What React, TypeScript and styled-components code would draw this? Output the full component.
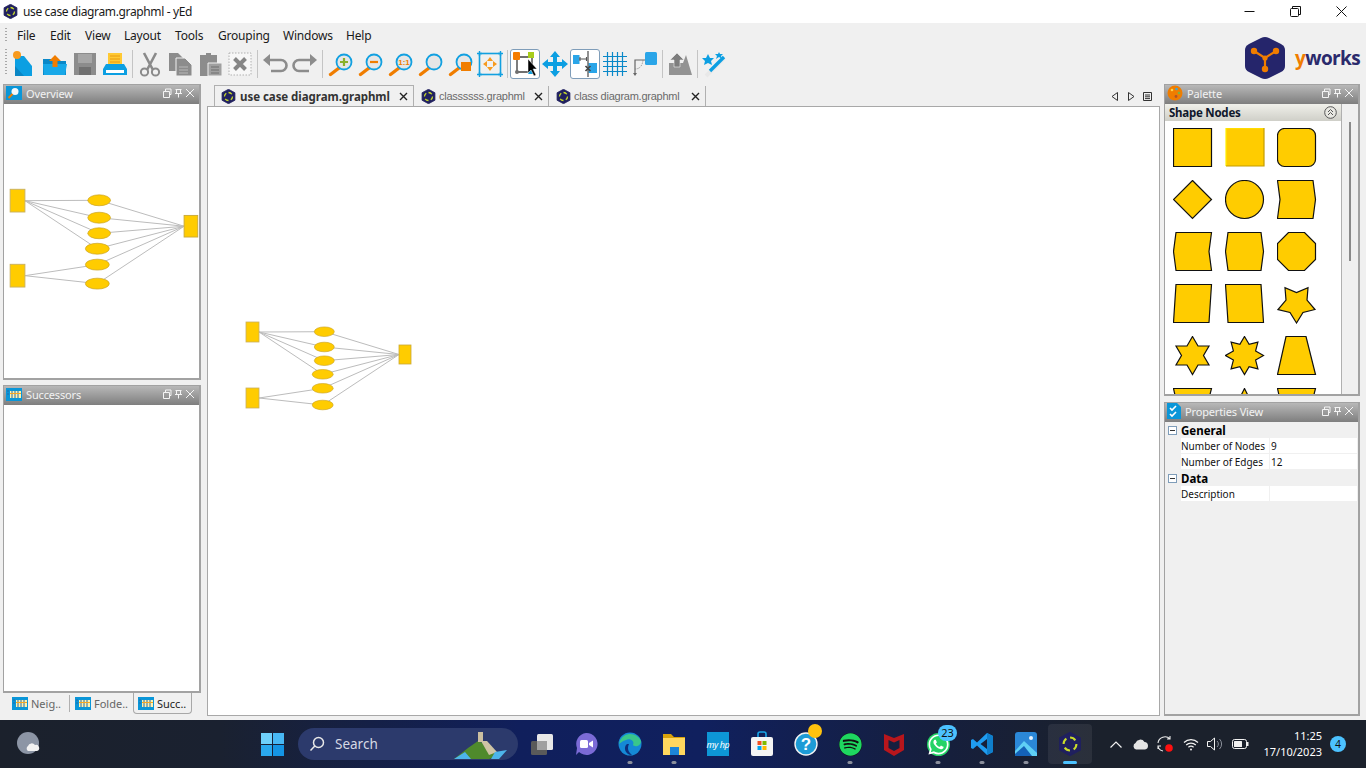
import React from 'react'
import styled, { createGlobalStyle } from 'styled-components'
import { FaSpotify, FaWhatsapp } from 'react-icons/fa'

const GlobalStyle = createGlobalStyle`
  html, body {
    margin: 0;
    padding: 0;
    overflow: hidden;
    background: #f0f0f0;
  }
  * {
    box-sizing: border-box;
  }
`

const UI_FONT = `'Noto Sans', 'Open Sans', sans-serif`

const Screen = styled.div`
  width: 1366px;
  height: 768px;
  display: flex;
  flex-direction: column;
  background: #f0f0f0;
  font-family: ${UI_FONT};
  color: #1a1a1a;
  overflow: hidden;
`

const TitleBar = styled.div`
  height: 23px;
  flex: none;
  display: flex;
  align-items: center;
  background: #fff;
  padding: 0 2px 0 3px;
  font-size: 12px;
`

const WindowTitle = styled.span`
  margin-left: 5px;
  flex: 1;
  letter-spacing: -0.36px;
`

const WindowButton = styled.div`
  width: 46px;
  height: 23px;
  display: flex;
  align-items: center;
  justify-content: center;
`

const Header = styled.div`
  height: 61px;
  flex: none;
  display: flex;
`

const HeaderBars = styled.div`
  flex: 1;
  display: flex;
  flex-direction: column;
`

const MenuBar = styled.div`
  height: 24px;
  display: flex;
  align-items: center;
  padding-left: 5px;
`

const Grip = styled.div<{ $h: number; $after: number }>`
  width: 2px;
  height: ${(p) => p.$h}px;
  flex: none;
  margin-right: ${(p) => p.$after}px;
  background: repeating-linear-gradient(to bottom, #a8a8a8 0 1px, transparent 1px 3px);
`

const Menu = styled.span<{ $w: number }>`
  width: ${(p) => p.$w}px;
  font-size: 12px;
  letter-spacing: -0.2px;
  color: #1a1a1a;
  flex: none;
`

const ToolBar = styled.div`
  height: 33px;
  display: flex;
  align-items: flex-start;
  padding-left: 5px;
  padding-top: 2px;
`

const ToolButton = styled.div<{ $on?: boolean }>`
  width: 30px;
  height: 30px;
  flex: none;
  border-radius: 3px;
  border: 1px solid ${(p) => (p.$on ? '#7f9db9' : 'transparent')};
  background: ${(p) => (p.$on ? '#fff' : 'transparent')};
  display: flex;
  align-items: center;
  justify-content: center;
`

const ToolSep = styled.div`
  width: 1px;
  height: 28px;
  margin: 1px 2px;
  background: #c4c4c4;
  flex: none;
`

const LogoBox = styled.div`
  width: 125px;
  height: 61px;
  flex: none;
  display: flex;
  align-items: center;
  gap: 8px;
  padding-left: 2px;
  padding-top: 9px;
`

const LogoWord = styled.span`
  font-family: 'Open Sans', sans-serif;
  font-weight: 700;
  font-size: 19px;
  letter-spacing: -0.6px;
  color: #2a2a6c;
  & em {
    font-style: normal;
    color: #f07d00;
  }
`

const Main = styled.div`
  flex: 1;
  min-height: 0;
  display: flex;
  padding: 0 6px 4px 3px;
`

const LeftColumn = styled.div`
  width: 198px;
  flex: none;
  display: flex;
  flex-direction: column;
  gap: 5px;
`

const CenterColumn = styled.div`
  flex: 1;
  min-width: 0;
  display: flex;
  flex-direction: column;
  margin: 0 4px 0 6px;
`

const RightColumn = styled.div`
  width: 196px;
  flex: none;
  display: flex;
  flex-direction: column;
  gap: 6px;
`

const Panel = styled.div<{ $h: number }>`
  height: ${(p) => p.$h}px;
  flex: none;
  display: flex;
  flex-direction: column;
  border: 1px solid #a2a2a2;
  border-right-width: 2px;
  border-bottom-width: 2px;
  background: #fff;
`

const PanelBar = styled.div`
  height: 19px;
  flex: none;
  display: flex;
  align-items: center;
  padding: 0 4px 3px 2px;
  background: linear-gradient(to bottom, #b8b8b8, #7e7e7e);
  color: #f2f2f2;
  font-size: 11px;
  letter-spacing: -0.15px;
`

const PanelTitle = styled.span`
  flex: 1;
  margin-left: 4px;
`

const BottomTabs = styled.div`
  height: 23px;
  flex: none;
  margin-top: -5px;
  display: flex;
  align-items: flex-start;
  padding-left: 8px;
  font-size: 11px;
  color: #666;
`

const BottomTab = styled.div<{ $w: number; $on?: boolean }>`
  width: ${(p) => p.$w}px;
  height: 21px;
  flex: none;
  display: flex;
  align-items: center;
  gap: 3px;
  padding-left: ${(p) => (p.$on ? 4 : 0)}px;
  color: ${(p) => (p.$on ? '#222' : '#666')};
  border: 1px solid ${(p) => (p.$on ? '#a8a8a8' : 'transparent')};
  border-top: 0;
  border-radius: 0 0 4px 4px;
`

const BottomTabSep = styled.div`
  width: 1px;
  height: 17px;
  margin: 2px 4px 0 0;
  background: #b0b0b0;
  flex: none;
`

const TabRow = styled.div`
  height: 22px;
  flex: none;
  display: flex;
  align-items: flex-end;
  padding-left: 7px;
`

const Tab = styled.div<{ $w: number; $on?: boolean }>`
  width: ${(p) => p.$w}px;
  height: ${(p) => (p.$on ? 21 : 20)}px;
  flex: none;
  display: flex;
  align-items: center;
  padding: 0 5px 0 ${(p) => (p.$on ? 6 : 7)}px;
  gap: ${(p) => (p.$on ? 4 : 3)}px;
  font-family: ${(p) => (p.$on ? UI_FONT : `'Liberation Sans', sans-serif`)};
  font-size: ${(p) => (p.$on ? 11.5 : 11)}px;
  letter-spacing: ${(p) => (p.$on ? -0.05 : -0.25)}px;
  font-weight: ${(p) => (p.$on ? 700 : 400)};
  color: ${(p) => (p.$on ? '#333' : '#6a6a6a')};
  border-right: 1px solid #b0b0b0;
  border-left: ${(p) => (p.$on ? '1px solid #b0b0b0' : '0')};
  border-top: ${(p) => (p.$on ? '1px solid #b0b0b0' : '0')};
`

const TabText = styled.span`
  flex: 1;
  white-space: nowrap;
`

const TabNav = styled.div`
  margin-left: auto;
  height: 20px;
  display: flex;
  align-items: center;
  gap: 8px;
  padding-right: 8px;
`

const Canvas = styled.div`
  flex: 1;
  min-height: 0;
  background: #fff;
  border: 1px solid #a8a8a8;
  padding: 213px 0 0 37px;
`

const OverviewBody = styled.div`
  flex: 1;
  padding: 83px 0 0 5px;
  overflow: hidden;
`

const PaletteBody = styled.div`
  flex: 1;
  min-height: 0;
  display: flex;
`

const PaletteList = styled.div`
  flex: 1;
  min-width: 0;
  display: flex;
  flex-direction: column;
  border-right: 1px solid #b0b0b0;
`

const PaletteHeader = styled.div`
  height: 17px;
  flex: none;
  display: flex;
  align-items: center;
  justify-content: space-between;
  padding: 0 4px;
  background: linear-gradient(to bottom, #f0f0ea, #cfcfc8);
  font-size: 11.5px;
  letter-spacing: -0.25px;
  font-weight: 700;
  color: #10182c;
`

const ShapeGrid = styled.div`
  flex: 1;
  overflow: hidden;
  display: grid;
  grid-template-columns: repeat(3, 40px);
  grid-auto-rows: 40px;
  gap: 12px;
  padding: 7px 0 0 8px;
`

const ScrollTrack = styled.div`
  width: 16px;
  flex: none;
  background: #f0f0f0;
  padding: 18px 0 0 7px;
`

const ScrollThumb = styled.div`
  width: 2px;
  height: 139px;
  background: #8a8a8a;
`

const PropBody = styled.div`
  flex: 1;
  background: #f0f0f0;
  padding: 0 1px 0 2px;
  font-size: 10px;
`

const PropSection = styled.div`
  height: 16px;
  display: flex;
  align-items: center;
  gap: 4px;
  padding-left: 1px;
  font-size: 11.5px;
  font-weight: 700;
  color: #000;
`

const ExpandBox = styled.span`
  width: 9px;
  height: 9px;
  border: 1px solid #7f9db9;
  background: #fff;
  display: flex;
  align-items: center;
  justify-content: center;
  &::after {
    content: '';
    width: 5px;
    height: 1px;
    background: #333;
  }
`

const PropRow = styled.div`
  height: 16px;
  margin-left: 14px;
  display: grid;
  grid-template-columns: 88px 1fr;
  gap: 1px;
  padding-bottom: 1px;
`

const PropCell = styled.div`
  background: #fff;
  color: #111;
  display: flex;
  align-items: center;
  white-space: nowrap;
  & + & {
    padding-left: 1px;
  }
`

const Taskbar = styled.div`
  height: 48px;
  flex: none;
  display: flex;
  align-items: center;
  padding-left: 17px;
  background: linear-gradient(
    to right,
    #1b212c 0,
    #1a2130 220px,
    #101f5c 520px,
    #10205e 700px,
    #161f3c 950px,
    #1b212c 1100px
  );
  color: #fff;
`

const Weather = styled.div`
  width: 24px;
  height: 24px;
  flex: none;
  margin-right: 209px;
`

const StartButton = styled.div`
  width: 44px;
  height: 48px;
  flex: none;
  display: flex;
  align-items: center;
  justify-content: center;
  margin-right: 4px;
`

const SearchBox = styled.div`
  width: 220px;
  height: 32px;
  flex: none;
  border-radius: 16px;
  background: #2c3a6c;
  display: flex;
  align-items: center;
  padding-left: 11px;
  gap: 10px;
  font-size: 13.5px;
  color: #d6d9e4;
  margin-right: 2px;
`

const SearchArt = styled.div`
  margin-left: auto;
  margin-right: 9px;
  height: 32px;
`

const AppButton = styled.div<{ $active?: boolean }>`
  position: relative;
  width: 44px;
  height: 40px;
  flex: none;
  border-radius: 4px;
  display: flex;
  align-items: center;
  justify-content: center;
  background: ${(p) => (p.$active ? 'rgba(255,255,255,0.07)' : 'transparent')};
`

const RunDot = styled.span<{ $active?: boolean }>`
  position: absolute;
  bottom: 0;
  left: 50%;
  transform: translateX(-50%);
  width: ${(p) => (p.$active ? 14 : 5)}px;
  height: 3px;
  border-radius: 2px;
  background: ${(p) => (p.$active ? '#4cc2ff' : '#8b8f9c')};
`

const Badge = styled.span`
  position: absolute;
  top: 1px;
  right: 3px;
  min-width: 19px;
  height: 16px;
  border-radius: 8px;
  background: #4cc2ff;
  color: #111;
  font-size: 11px;
  line-height: 16px;
  text-align: center;
`

const YellowDot = styled.span`
  position: absolute;
  top: 0;
  right: 6px;
  width: 14px;
  height: 14px;
  border-radius: 50%;
  background: #ffc20e;
`

const HpTile = styled.div`
  width: 22px;
  height: 24px;
  background: #0d96d6;
  color: #fff;
  font-size: 9px;
  font-style: italic;
  white-space: nowrap;
  display: flex;
  align-items: center;
  justify-content: center;
  letter-spacing: -0.4px;
`

const Tray = styled.div`
  margin-left: auto;
  height: 48px;
  display: flex;
  align-items: center;
  padding-right: 20px;
`

const TrayIcon = styled.div<{ $w: number }>`
  width: ${(p) => p.$w}px;
  flex: none;
  display: flex;
  justify-content: center;
`

const Clock = styled.div`
  width: 66px;
  margin-left: 2px;
  text-align: right;
  font-size: 11px;
  line-height: 16px;
  color: #fff;
`

const NotifyDot = styled.div`
  width: 16px;
  height: 16px;
  flex: none;
  margin-left: 8px;
  border-radius: 50%;
  background: #4cc2ff;
  color: #111;
  font-size: 10.5px;
  line-height: 16px;
  text-align: center;
`

// ---- small drawings ----

const YedLogo = ({ size = 14 }: { size?: number }) => (
  <svg width={size} height={size} viewBox='0 0 28 28' style={{ flex: 'none' }}>
    <path d='M14 0.5 L26 7 V21 L14 27.5 L2 21 V7 Z' fill='#20205f' stroke='#20205f' strokeWidth='1.5' strokeLinejoin='round' />
    <circle cx='14' cy='14' r='7.5' fill='none' stroke='#c9dc2a' strokeWidth='2.4' strokeDasharray='7 4.5' />
  </svg>
)

const MiniButtons = () => (
  <svg width='34' height='10' viewBox='0 0 34 10' style={{ flex: 'none' }} fill='none' stroke='#f4f4f4'>
    <path d='M2.5 3.5 H8.5 V9.5 H2.5 Z M4.5 3 V1 H10 V6.5 H9' />
    <path d='M14.5 1.5 H20.5 M15.5 1.5 V5.5 H19.5 V1.5 M14 5.5 H21 M17.5 5.5 V9.5' />
    <path d='M25 1 L33 9 M33 1 L25 9' />
  </svg>
)

const CloseX = () => (
  <svg width='9' height='9' viewBox='0 0 9 9' style={{ flex: 'none' }}>
    <path d='M1 1 L8 8 M8 1 L1 8' stroke='#222' strokeWidth='1.4' />
  </svg>
)

const ViewIcon = () => (
  <svg width='16' height='13' viewBox='0 0 16 13' style={{ flex: 'none' }}>
    <rect width='16' height='13' fill='#0a96d8' />
    <rect x='4' y='3' width='11' height='7' fill='#fff3b0' />
    <path d='M1 3 H3 M1 6 H3 M6 3 V10 M9 3 V10 M12 3 V10' stroke='#2668a8' strokeWidth='1' />
    <rect x='4' y='5' width='11' height='1' fill='#f5a623' />
  </svg>
)

const OverviewIcon = () => (
  <svg width='16' height='14' viewBox='0 0 16 14' style={{ flex: 'none' }}>
    <rect width='16' height='14' fill='#0a96d8' />
    <circle cx='9' cy='5.5' r='3.5' fill='#f4f8fb' />
    <path d='M6.5 8 L2.5 12' stroke='#f07d00' strokeWidth='2' />
  </svg>
)

const PaletteIcon = () => (
  <svg width='16' height='16' viewBox='0 0 16 16' style={{ flex: 'none' }}>
    <circle cx='8' cy='8' r='7.5' fill='#f07d00' />
    <circle cx='5' cy='5' r='1.3' fill='#ffd24a' />
    <circle cx='9.5' cy='4' r='1.3' fill='#3aa7e0' />
    <circle cx='12' cy='8' r='1.3' fill='#7cb342' />
    <circle cx='9' cy='11.5' r='1.4' fill='#b0532a' />
  </svg>
)

const PropsIcon = () => (
  <svg width='14' height='16' viewBox='0 0 14 16' style={{ flex: 'none' }}>
    <path d='M0 0 H10 L14 4 V16 H0 Z' fill='#0a96d8' />
    <path d='M3 5 L5 7 L9 3 M3 11 L5 13 L9 9' stroke='#fff' strokeWidth='1.6' fill='none' />
  </svg>
)

const Lens = ({ children }: { children?: React.ReactNode }) => (
  <svg width='28' height='28' viewBox='0 0 28 28'>
    <path d='M13 18 L4.5 24.5' stroke='#f07d00' strokeWidth='3.4' strokeLinecap='round' />
    <circle cx='18' cy='12' r='7.5' fill='#e6e6e6' stroke='#12a0e0' strokeWidth='1.8' />
    {children}
  </svg>
)

const Icon28 = ({ children }: { children: React.ReactNode }) => (
  <svg width='28' height='28' viewBox='0 0 28 28'>
    {children}
  </svg>
)

const TOOL = {
  create: (
    <Icon28>
      <path d='M4 6 L13 6 L21 16 V26 H4 Z' fill='#0c9fe2' />
      <path d='M4 16 L13 26 H4 Z' fill='#0a86c4' />
      <circle cx='6' cy='5' r='4' fill='#f79a1e' />
    </Icon28>
  ),
  open: (
    <Icon28>
      <path d='M2 9 H10 L12 11 H25 V25 H2 Z' fill='#0a88c8' />
      <path d='M2 14 H26 L24 25 H3 Z' fill='#18a8e8' />
      <path d='M14 5 L20 11 H16.5 V17 H11.5 V11 H8 Z' fill='#f07d00' />
    </Icon28>
  ),
  save: (
    <Icon28>
      <path d='M3 3 H25 V25 H3 Z' fill='#8c8c8c' />
      <rect x='7' y='4' width='14' height='9' fill='#a6a6a6' />
      <rect x='8' y='17' width='12' height='8' fill='#707070' />
    </Icon28>
  ),
  print: (
    <Icon28>
      <rect x='7' y='3' width='14' height='12' fill='#ffc933' />
      <path d='M9 6 H19 M9 9 H19 M9 12 H19' stroke='#e89a10' />
      <path d='M5 14 H23 L26 19 V25 H2 V19 Z' fill='#0c9fe2' />
      <rect x='5' y='20' width='18' height='3' fill='#fff' />
    </Icon28>
  ),
  cut: (
    <Icon28>
      <path d='M8 3 L17 20 M20 3 L11 20' stroke='#8a8a8a' strokeWidth='2.6' />
      <circle cx='8.5' cy='22' r='3.6' fill='none' stroke='#8a8a8a' strokeWidth='2' />
      <circle cx='19.5' cy='22' r='3.6' fill='none' stroke='#8a8a8a' strokeWidth='2' />
    </Icon28>
  ),
  copy: (
    <Icon28>
      <path d='M3 3 H12 L17 8 V21 H3 Z' fill='#8c8c8c' />
      <path d='M10 8 H19 L26 15 V26 H10 Z' fill='#8c8c8c' stroke='#f0f0f0' />
      <path d='M13 17 H22 M13 20 H22 M13 23 H22' stroke='#b8b8b8' />
    </Icon28>
  ),
  paste: (
    <Icon28>
      <path d='M4 5 H10 V3 H15 V5 H21 V26 H4 Z' fill='#8c8c8c' />
      <path d='M12 13 H26 V26 H12 Z' fill='#a0a0a0' stroke='#f0f0f0' />
      <path d='M15 17 H23 M15 20 H23 M15 23 H23' stroke='#6e6e6e' />
    </Icon28>
  ),
  remove: (
    <Icon28>
      <rect x='3' y='3' width='22' height='22' fill='#f7f7f7' stroke='#b0b0b0' strokeDasharray='1.5 1.5' />
      <path d='M8.5 8.5 L19.5 19.5 M19.5 8.5 L8.5 19.5' stroke='#868686' strokeWidth='4' />
    </Icon28>
  ),
  undo: (
    <Icon28>
      <path d='M5 10 H20 A5.5 5.5 0 0 1 20 21 H10' fill='none' stroke='#8c8c8c' strokeWidth='2.6' />
      <path d='M9 4 L2 10 L9 16 Z' fill='#8c8c8c' />
    </Icon28>
  ),
  redo: (
    <Icon28>
      <path d='M23 10 H8 A5.5 5.5 0 0 0 8 21 H18' fill='none' stroke='#8c8c8c' strokeWidth='2.6' />
      <path d='M19 4 L26 10 L19 16 Z' fill='#8c8c8c' />
    </Icon28>
  ),
  zoomIn: (
    <Lens>
      <path d='M14 12 H22 M18 8 V16' stroke='#8ab02a' strokeWidth='2.2' />
    </Lens>
  ),
  zoomOut: (
    <Lens>
      <path d='M14 12 H22' stroke='#f07d00' strokeWidth='2.2' />
    </Lens>
  ),
  zoomOne: (
    <Lens>
      <text x='18' y='15' fontSize='8' fontWeight='700' textAnchor='middle' fill='#f07d00' fontFamily='Liberation Sans, sans-serif'>
        1:1
      </text>
    </Lens>
  ),
  zoomPlain: <Lens />,
  zoomArea: (
    <Lens>
      <path d='M15 12 H25 V21 H15 Z' fill='#f07d00' />
    </Lens>
  ),
  fit: (
    <Icon28>
      <rect x='3.5' y='3.5' width='21' height='21' fill='none' stroke='#12a0e0' strokeWidth='1.6' />
      <path d='M1 3.5 H6 M3.5 1 V6 M22 3.5 H27 M24.5 1 V6 M1 24.5 H6 M3.5 22 V27 M22 24.5 H27 M24.5 22 V27' stroke='#12a0e0' strokeWidth='1.4' />
      <path d='M14 7 L17 11 H11 Z M14 21 L17 17 H11 Z M7 14 L11 11 V17 Z M21 14 L17 11 V17 Z' fill='#f79a1e' />
    </Icon28>
  ),
  select: (
    <Icon28>
      <path d='M6 7 H21 V22 H6 Z' fill='none' stroke='#707070' strokeWidth='1.8' />
      <rect x='2' y='2' width='7' height='8' rx='1' fill='#f57c00' />
      <rect x='17' y='2' width='6' height='6' fill='#a8cc1c' />
      <rect x='17' y='19' width='6' height='5' rx='1' fill='#12a0e0' />
      <circle cx='6' cy='22' r='2' fill='#707070' />
      <path d='M17 9 L17 23 L20 20 L23 26 L25 25 L22 19 L26 19 Z' fill='#000' stroke='#fff' strokeWidth='0.5' />
    </Icon28>
  ),
  move: (
    <Icon28>
      <path d='M14 1 L19 7 H16 V12 H21 V9 L27 14 L21 19 V16 H16 V21 H19 L14 27 L9 21 H12 V16 H7 V19 L1 14 L7 9 V12 H12 V7 H9 Z' fill='#0c9fe2' />
    </Icon28>
  ),
  ortho: (
    <Icon28>
      <rect x='2' y='5' width='6.5' height='9' fill='#2aa5e8' />
      <rect x='17' y='13' width='9' height='10' fill='#2aa5e8' />
      <path d='M17 1 V27' stroke='#777' strokeWidth='1.6' />
      <path d='M8 9 H16 M9 7 V11 M15.5 7 V11' stroke='#555' strokeWidth='1.1' />
      <path d='M14.5 16 L19.5 21 M19.5 16 L14.5 21' stroke='#444' strokeWidth='1.6' />
    </Icon28>
  ),
  grid: (
    <Icon28>
      <path d='M2 6.5 H26 M2 11.5 H26 M2 16.5 H26 M2 21.5 H26 M6.5 2 V26 M11.5 2 V26 M16.5 2 V26 M21.5 2 V26' stroke='#0a88c8' strokeWidth='1.2' />
    </Icon28>
  ),
  edge: (
    <Icon28>
      <rect x='14' y='2' width='12' height='13' rx='1.5' fill='#2aa5e8' />
      <path d='M14 10 H4 V24' fill='none' stroke='#666' strokeWidth='1.2' />
      <path d='M4 19 Q11 19 12 10' fill='none' stroke='#888' strokeDasharray='1.2 1.2' />
      <path d='M2 23 H6 L4 26 Z' fill='#666' />
    </Icon28>
  ),
  group: (
    <Icon28>
      <path d='M3 13 H17 L20 5 L26 25 H3 Z' fill='#939393' />
      <path d='M11 3 L18 10 H14 V17 H8 V10 H4 Z' fill='#7d7d7d' stroke='#f0f0f0' strokeWidth='0.6' />
    </Icon28>
  ),
  wand: (
    <Icon28>
      <path d='M5 26 L23 8' stroke='#e8e8e8' strokeWidth='4' />
      <path d='M9 21 L23 7' stroke='#0c9fe2' strokeWidth='3.4' />
      <path d='M7 4 L9 8 L13 8 L10 11 L11 15 L7 13 L3 15 L4 11 L1 8 L5 8 Z' fill='#0c9fe2' />
      <path d='M18 2 L19 4 L22 4 L20 6 L21 9 L18 7 L15 9 L16 6 L14 4 L17 4 Z' fill='#0c9fe2' />
    </Icon28>
  ),
}

type ToolName = keyof typeof TOOL

// toolbar groups, a separator goes between each
const TOOL_GROUPS: ToolName[][] = [
  ['create', 'open', 'save', 'print'],
  ['cut', 'copy', 'paste', 'remove'],
  ['undo', 'redo'],
  ['zoomIn', 'zoomOut', 'zoomOne', 'zoomPlain', 'zoomArea', 'fit'],
  ['select', 'move', 'ortho', 'grid', 'edge'],
  ['group'],
  ['wand'],
]

const MENUS: [string, number][] = [
  ['File', 33],
  ['Edit', 35],
  ['View', 39],
  ['Layout', 51],
  ['Tools', 43],
  ['Grouping', 65],
  ['Windows', 63],
  ['Help', 30],
]

// same model is drawn on the canvas and, scaled up, in the overview
const NODES_LEFT = [
  { x: 1, y: 2, h: 20 },
  { x: 1, y: 68, h: 20 },
]
const NODE_RIGHT = { x: 154, y: 25, w: 12, h: 19 }
const ELLIPSES = [
  { cx: 79.3, cy: 11.7, from: 0 },
  { cx: 79.3, cy: 27, from: 0 },
  { cx: 79.3, cy: 40.7, from: 0 },
  { cx: 77.7, cy: 54.3, from: 0 },
  { cx: 77.7, cy: 68.3, from: 1 },
  { cx: 77.7, cy: 85, from: 1 },
]

const Graph = ({ scale }: { scale: number }) => (
  <svg width={170 * scale} height={92 * scale} viewBox='0 0 170 92' style={{ display: 'block' }}>
    {ELLIPSES.map((e, i) => (
      <g key={i} stroke='#bcbcbc' strokeWidth={1 / scale}>
        <line x1={14} y1={NODES_LEFT[e.from].y + 10} x2={e.cx} y2={e.cy} />
        <line x1={e.cx} y1={e.cy} x2={NODE_RIGHT.x} y2={NODE_RIGHT.y + 9.5} />
      </g>
    ))}
    {NODES_LEFT.map((n, i) => (
      <rect key={i} x={n.x} y={n.y} width={13} height={n.h} fill='#ffcc00' stroke='#c8b060' strokeWidth='0.8' />
    ))}
    <rect x={NODE_RIGHT.x} y={NODE_RIGHT.y} width={NODE_RIGHT.w} height={NODE_RIGHT.h} fill='#ffcc00' stroke='#c8a838' strokeWidth='0.8' />
    {ELLIPSES.map((e, i) => (
      <ellipse key={i} cx={e.cx} cy={e.cy} rx={i > 2 ? 10.5 : 10} ry={4.8} fill='#ffcc00' stroke='#c8a020' strokeWidth='0.6' />
    ))}
  </svg>
)

const starPoints = (n: number, R: number, r: number, rot: number) => {
  const pts: string[] = []
  for (let i = 0; i < n * 2; i++) {
    const a = rot + (i * Math.PI) / n
    const rad = i % 2 === 0 ? R : r
    pts.push(`${(19.5 + rad * Math.sin(a)).toFixed(1)},${(19.5 - rad * Math.cos(a)).toFixed(1)}`)
  }
  return pts.join(' ')
}

const SHAPES: string[] = [
  '0.5,0.5 38.5,0.5 38.5,38.5 0.5,38.5',
  '',
  '',
  '19.5,0.5 38.5,19.5 19.5,38.5 0.5,19.5',
  '',
  '0.5,0.5 36,0.5 38.5,19.5 36,38.5 0.5,38.5 3,19.5',
  '3,0.5 38.5,0.5 36,19.5 38.5,38.5 3,38.5 0.5,19.5',
  '3,0.5 36,0.5 38.5,19.5 36,38.5 3,38.5 0.5,19.5',
  '11.5,0.5 27.5,0.5 38.5,11.5 38.5,27.5 27.5,38.5 11.5,38.5 0.5,27.5 0.5,11.5',
  '3,0.5 38.5,0.5 36,38.5 0.5,38.5',
  '0.5,0.5 36,0.5 38.5,38.5 3,38.5',
  starPoints(5, 19.5, 11, Math.PI),
  starPoints(6, 19, 11, 0),
  starPoints(8, 19, 12, 0),
  '9,0.5 29,0.5 38.5,38.5 0.5,38.5',
  '0.5,0.5 38.5,0.5 29,38.5 9,38.5',
  '19.5,0.5 38.5,38.5 0.5,38.5',
  '0.5,0.5 38.5,0.5 29,38.5 9,38.5',
]

const ShapeNode = ({ index }: { index: number }) => {
  const pts = SHAPES[index]
  return (
    <svg width='40' height='40' viewBox='0 0 40 40'>
      {index === 1 && (
        <>
          <rect x='1' y='0' width='38' height='38' fill='#ffcc00' />
          <path d='M1 38 V0 H39' fill='none' stroke='#ffee00' strokeWidth='1.2' />
          <path d='M1 38 H39 V0' fill='none' stroke='#c49c00' strokeWidth='1.2' />
        </>
      )}
      {index === 2 && <rect x='0.5' y='0.5' width='38' height='38' rx='7' fill='#ffcc00' stroke='#111' strokeWidth='1.2' />}
      {index === 4 && <circle cx='19.5' cy='19.5' r='19' fill='#ffcc00' stroke='#111' strokeWidth='1.2' />}
      {pts && <polygon points={pts} fill='#ffcc00' stroke='#111' strokeWidth='1.2' />}
    </svg>
  )
}

const YworksMark = () => (
  <svg width='44' height='46' viewBox='0 0 44 46'>
    <path d='M22 2 Q24 2 26 3 L38 9 Q42 11 42 15 V31 Q42 35 38 37 L26 43 Q22 45 18 43 L6 37 Q2 35 2 31 V15 Q2 11 6 9 L18 3 Q20 2 22 2 Z' fill='#25256b' />
    <path d='M11 16 L22 23 L33 16 M22 23 V34' fill='none' stroke='#f07d00' strokeWidth='2.2' />
    <circle cx='11' cy='16' r='3.2' fill='#f07d00' />
    <circle cx='33' cy='16' r='3.2' fill='#f07d00' />
    <circle cx='22' cy='34' r='3.2' fill='#f07d00' />
    <circle cx='22' cy='23' r='2.6' fill='#f07d00' />
  </svg>
)

const TASK_ICONS: { key: string; node: React.ReactNode; run?: boolean; active?: boolean; badge?: string; dot?: boolean }[] = [
  {
    key: 'taskview',
    node: (
      <svg width='24' height='24' viewBox='0 0 24 24'>
        <rect x='1' y='9' width='16' height='14' rx='1.5' fill='#5a5a5a' />
        <rect x='7' y='2' width='16' height='16' rx='1.5' fill='#e8e8e8' />
        <rect x='7' y='9' width='10' height='9' fill='#a0a0a0' />
      </svg>
    ),
  },
  {
    key: 'teams',
    node: (
      <svg width='24' height='24' viewBox='0 0 24 24'>
        <path d='M12 1 A11 11 0 1 1 5 20 L2 23 L3 16 A11 11 0 0 1 12 1 Z' fill='#7b6bd6' />
        <rect x='6' y='8' width='8' height='8' rx='1.5' fill='#fff' />
        <path d='M15 11 L19 8.5 V15.5 L15 13 Z' fill='#fff' />
      </svg>
    ),
  },
  {
    key: 'edge',
    node: (
      <svg width='24' height='24' viewBox='0 0 24 24'>
        <circle cx='12' cy='12' r='11.5' fill='#1589d6' />
        <path d='M1 12 A11.5 11.5 0 0 1 23 9 C23 15 16 15 15 13 C17 9 12 6 8 8 C4 9.5 2 11 1 12 Z' fill='#39c68c' />
        <path d='M9 12 C5 15 7 23 14 23 C10 20 9 16 11 12 Z' fill='#0d2f7d' />
      </svg>
    ),
    run: true,
  },
  {
    key: 'explorer',
    node: (
      <svg width='24' height='24' viewBox='0 0 24 24'>
        <path d='M1 2 H9 L12 5 H23 V22 H1 Z' fill='#d9a20a' />
        <rect x='1' y='6' width='22' height='17' fill='#ffd75e' />
        <rect x='8' y='15' width='9' height='8' fill='#1c85d8' />
      </svg>
    ),
    run: true,
  },
  { key: 'hp', node: <HpTile>my hp</HpTile> },
  {
    key: 'store',
    node: (
      <svg width='24' height='26' viewBox='0 0 24 26'>
        <path d='M8 6 V3 A2 2 0 0 1 10 1 H14 A2 2 0 0 1 16 3 V6' fill='none' stroke='#18a6e8' strokeWidth='1.6' />
        <rect x='1' y='6' width='22' height='19' rx='2' fill='#f4f4f4' />
        <rect x='7.5' y='10' width='4' height='4' fill='#f25022' />
        <rect x='12.5' y='10' width='4' height='4' fill='#7fba00' />
        <rect x='7.5' y='15' width='4' height='4' fill='#00a4ef' />
        <rect x='12.5' y='15' width='4' height='4' fill='#ffb900' />
      </svg>
    ),
  },
  {
    key: 'help',
    node: (
      <svg width='24' height='24' viewBox='0 0 24 24'>
        <circle cx='12' cy='12' r='11' fill='#1d9bd6' stroke='#f2f2f2' strokeWidth='1.4' />
        <text x='12' y='18' fontSize='17' fontWeight='700' textAnchor='middle' fill='#fff' fontFamily='Liberation Sans, sans-serif'>
          ?
        </text>
      </svg>
    ),
    dot: true,
  },
  {
    key: 'spotify',
    node: (
      <span style={{ display: 'flex', background: '#111', borderRadius: '50%' }}>
        <FaSpotify size={23} color='#1ed760' />
      </span>
    ),
    run: true,
  },
  {
    key: 'mcafee',
    node: (
      <svg width='22' height='26' viewBox='0 0 22 26'>
        <path d='M1 3 L11 7 L21 3 V19 L11 25 L1 19 Z' fill='#b8161c' />
        <path d='M5.5 9 L11 11.5 L16.5 9 V17 L11 20 L5.5 17 Z' fill='#151f3f' />
      </svg>
    ),
    run: false,
  },
  {
    key: 'whatsapp',
    node: (
      <span style={{ display: 'flex', background: '#25d366', borderRadius: '50%' }}>
        <FaWhatsapp size={23} color='#fff' />
      </span>
    ),
    run: true,
    badge: '23',
  },
  {
    key: 'vscode',
    node: (
      <svg width='24' height='24' viewBox='0 0 24 24'>
        <path d='M17 1 L23 4 V20 L17 23 L7 13.5 L3 17 L1 16 V8 L3 7 L7 10.5 Z M17 7 L10.5 12 L17 17 Z' fill='#1f9cf0' fillRule='evenodd' />
        <path d='M17 1 L23 4 V20 L17 23 Z' fill='#0f7fcc' />
      </svg>
    ),
    run: true,
  },
  {
    key: 'photos',
    node: (
      <svg width='22' height='24' viewBox='0 0 22 24'>
        <rect width='22' height='24' rx='3' fill='#2b88d8' />
        <circle cx='16' cy='6' r='2' fill='#e8f4ff' />
        <path d='M0 19 L9 9 L22 21 V24 H0 Z' fill='#5fd0f5' />
        <path d='M0 22 L9 14 L17 24 H0 Z' fill='#1462b8' />
      </svg>
    ),
    run: true,
  },
  { key: 'yed', node: <YedLogo size={24} />, active: true, run: true },
]

const App = () => {
  return (
    <Screen>
      <GlobalStyle />
      <TitleBar>
        <YedLogo size={15} />
        <WindowTitle>use case diagram.graphml - yEd</WindowTitle>
        <WindowButton>
          <svg width='11' height='11' viewBox='0 0 11 11'>
            <path d='M0.5 5.5 H10.5' stroke='#111' />
          </svg>
        </WindowButton>
        <WindowButton>
          <svg width='11' height='11' viewBox='0 0 11 11' fill='none' stroke='#111'>
            <rect x='0.5' y='2.5' width='8' height='8' rx='1' />
            <path d='M2.5 2.5 V0.5 H10.5 V8.5 H8.5' />
          </svg>
        </WindowButton>
        <WindowButton>
          <svg width='11' height='11' viewBox='0 0 11 11'>
            <path d='M0.5 0.5 L10.5 10.5 M10.5 0.5 L0.5 10.5' stroke='#111' />
          </svg>
        </WindowButton>
      </TitleBar>

      <Header>
        <HeaderBars>
          <MenuBar>
            <Grip $h={14} $after={10} />
            {MENUS.map(([label, w]) => (
              <Menu key={label} $w={w}>
                {label}
              </Menu>
            ))}
          </MenuBar>
          <ToolBar>
            <Grip $h={26} $after={3} />
            {TOOL_GROUPS.map((group, gi) => (
              <React.Fragment key={gi}>
                {gi > 0 && <ToolSep />}
                {group.map((name) => (
                  <ToolButton key={name} $on={name === 'select' || name === 'ortho'}>
                    {TOOL[name]}
                  </ToolButton>
                ))}
              </React.Fragment>
            ))}
          </ToolBar>
        </HeaderBars>
        <LogoBox>
          <YworksMark />
          <LogoWord>
            <em>y</em>works
          </LogoWord>
        </LogoBox>
      </Header>

      <Main>
        <LeftColumn>
          <Panel $h={296}>
            <PanelBar>
              <OverviewIcon />
              <PanelTitle>Overview</PanelTitle>
              <MiniButtons />
            </PanelBar>
            <OverviewBody>
              <Graph scale={1.137} />
            </OverviewBody>
          </Panel>
          <Panel $h={308}>
            <PanelBar>
              <ViewIcon />
              <PanelTitle>Successors</PanelTitle>
              <MiniButtons />
            </PanelBar>
          </Panel>
          <BottomTabs>
            <BottomTab $w={58}>
              <ViewIcon />
              Neig..
            </BottomTab>
            <BottomTabSep />
            <BottomTab $w={59}>
              <ViewIcon />
              Folde..
            </BottomTab>
            <BottomTab $w={59} $on>
              <ViewIcon />
              Succ..
            </BottomTab>
          </BottomTabs>
        </LeftColumn>

        <CenterColumn>
          <TabRow>
            <Tab $w={200} $on>
              <YedLogo size={15} />
              <TabText>use case diagram.graphml</TabText>
              <CloseX />
            </Tab>
            <Tab $w={135}>
              <YedLogo size={15} />
              <TabText>classssss.graphml</TabText>
              <CloseX />
            </Tab>
            <Tab $w={157}>
              <YedLogo size={15} />
              <TabText>class diagram.graphml</TabText>
              <CloseX />
            </Tab>
            <TabNav>
              <svg width='8' height='9' viewBox='0 0 8 9'>
                <path d='M6.5 0.5 V8.5 L1 4.5 Z' fill='none' stroke='#333' />
              </svg>
              <svg width='8' height='9' viewBox='0 0 8 9'>
                <path d='M1.5 0.5 V8.5 L7 4.5 Z' fill='none' stroke='#333' />
              </svg>
              <svg width='9' height='9' viewBox='0 0 9 9'>
                <path d='M0.5 0.5 H8.5 V8.5 H0.5 Z M2 3 H7 M2 4.8 H7 M2 6.6 H7' fill='none' stroke='#333' />
              </svg>
            </TabNav>
          </TabRow>
          <Canvas>
            <Graph scale={1} />
          </Canvas>
        </CenterColumn>

        <RightColumn>
          <Panel $h={312}>
            <PanelBar>
              <PaletteIcon />
              <PanelTitle>Palette</PanelTitle>
              <MiniButtons />
            </PanelBar>
            <PaletteBody>
              <PaletteList>
                <PaletteHeader>
                  Shape Nodes
                  <svg width='13' height='13' viewBox='0 0 13 13' fill='none' stroke='#555'>
                    <circle cx='6.5' cy='6.5' r='5.8' fill='#e8e8e2' />
                    <path d='M4 6 L6.5 3.5 L9 6 M4 9 L6.5 6.5 L9 9' />
                  </svg>
                </PaletteHeader>
                <ShapeGrid>
                  {SHAPES.map((_, i) => (
                    <ShapeNode key={i} index={i} />
                  ))}
                </ShapeGrid>
              </PaletteList>
              <ScrollTrack>
                <ScrollThumb />
              </ScrollTrack>
            </PaletteBody>
          </Panel>
          <Panel $h={314}>
            <PanelBar>
              <PropsIcon />
              <PanelTitle>Properties View</PanelTitle>
              <MiniButtons />
            </PanelBar>
            <PropBody>
              <PropSection>
                <ExpandBox />
                General
              </PropSection>
              <PropRow>
                <PropCell>Number of Nodes</PropCell>
                <PropCell>9</PropCell>
              </PropRow>
              <PropRow>
                <PropCell>Number of Edges</PropCell>
                <PropCell>12</PropCell>
              </PropRow>
              <PropSection>
                <ExpandBox />
                Data
              </PropSection>
              <PropRow>
                <PropCell>Description</PropCell>
                <PropCell />
              </PropRow>
            </PropBody>
          </Panel>
        </RightColumn>
      </Main>

      <Taskbar>
        <Weather>
          <svg width='24' height='24' viewBox='0 0 24 24'>
            <circle cx='11' cy='11' r='11' fill='#8c95a5' />
            <path d='M11 19 A3 3 0 0 1 11 14 A4 4 0 0 1 18 13 A3 3 0 0 1 20 19 Z' fill='#f2f2f2' />
          </svg>
        </Weather>
        <StartButton>
          <svg width='23' height='23' viewBox='0 0 23 23'>
            <rect width='11' height='11' fill='#6fd0fb' />
            <rect x='12' width='11' height='11' fill='#48b8f4' />
            <rect y='12' width='11' height='11' fill='#2aa8ee' />
            <rect x='12' y='12' width='11' height='11' fill='#1494e4' />
          </svg>
        </StartButton>
        <SearchBox>
          <svg width='16' height='16' viewBox='0 0 16 16' fill='none' stroke='#e8e8e8' strokeWidth='1.5'>
            <circle cx='9.5' cy='6.5' r='5' />
            <path d='M5.8 10 L1.5 14.5' />
          </svg>
          Search
          <SearchArt>
            <svg width='56' height='32' viewBox='0 0 56 32' style={{ display: 'block' }}>
              <path d='M1 31 L15 20 L25 13 L32 16 L45 28 L36 31 Z' fill='#4f8a2c' />
              <rect x='25' y='4' width='5' height='10' fill='#cbbfa0' />
              <path d='M28 13 L34 13 L44 24 L36 27 Z' fill='#cfc4a4' />
              <path d='M1 31 L12 24 L18 31 Z M42 24 L54 22 L46 31 L38 31 Z' fill='#4db4ea' />
            </svg>
          </SearchArt>
        </SearchBox>
        {TASK_ICONS.map((t) => (
          <AppButton key={t.key} $active={t.active}>
            {t.node}
            {t.badge && <Badge>{t.badge}</Badge>}
            {t.dot && <YellowDot />}
            {t.run && <RunDot $active={t.active} />}
          </AppButton>
        ))}
        <Tray>
          <TrayIcon $w={24}>
            <svg width='12' height='7' viewBox='0 0 12 7' fill='none' stroke='#f2f2f2' strokeWidth='1.2'>
              <path d='M0.5 6.5 L6 1 L11.5 6.5' />
            </svg>
          </TrayIcon>
          <TrayIcon $w={24}>
            <svg width='17' height='12' viewBox='0 0 17 12'>
              <path d='M4 11.5 A3.5 3.5 0 0 1 3.5 5 A5 5 0 0 1 12.5 4 A3.8 3.8 0 0 1 13 11.5 Z' fill='#e4e4e4' />
            </svg>
          </TrayIcon>
          <TrayIcon $w={25}>
            <svg width='18' height='18' viewBox='0 0 18 18' fill='none' stroke='#ececec' strokeWidth='1.1'>
              <path d='M2 8 A7 7 0 0 1 14 4 M14 1 V4 H11 M2 14 V11 H5 M2 11 A6 6 0 0 0 7 16' />
              <circle cx='13' cy='13' r='3.8' fill='#ff1010' stroke='none' />
            </svg>
          </TrayIcon>
          <TrayIcon $w={27}>
            <svg width='16' height='13' viewBox='0 0 16 13' fill='none' stroke='#f2f2f2' strokeWidth='1.2'>
              <path d='M1 4.5 A10 10 0 0 1 15 4.5 M3.2 7 A7 7 0 0 1 12.8 7 M5.4 9.3 A4 4 0 0 1 10.6 9.3' />
              <circle cx='8' cy='11.5' r='1' fill='#f2f2f2' stroke='none' />
            </svg>
          </TrayIcon>
          <TrayIcon $w={22}>
            <svg width='16' height='14' viewBox='0 0 16 14' fill='none' stroke='#f2f2f2'>
              <path d='M0.5 4.5 H3.5 L7.5 1 V13 L3.5 9.5 H0.5 Z' />
              <path d='M10 4 A4 4 0 0 1 10 10 M12.5 2 A7 7 0 0 1 12.5 12' stroke='#8a8f9a' />
            </svg>
          </TrayIcon>
          <TrayIcon $w={28}>
            <svg width='17' height='10' viewBox='0 0 17 10'>
              <rect x='0.5' y='0.5' width='14' height='9' rx='2' fill='none' stroke='#f2f2f2' />
              <rect x='2' y='2' width='8' height='6' rx='0.5' fill='#f2f2f2' />
              <rect x='15' y='3' width='1.5' height='4' fill='#f2f2f2' />
            </svg>
          </TrayIcon>
          <Clock>
            11:25
            <br />
            17/10/2023
          </Clock>
          <NotifyDot>4</NotifyDot>
        </Tray>
      </Taskbar>
    </Screen>
  )
}

export default App
